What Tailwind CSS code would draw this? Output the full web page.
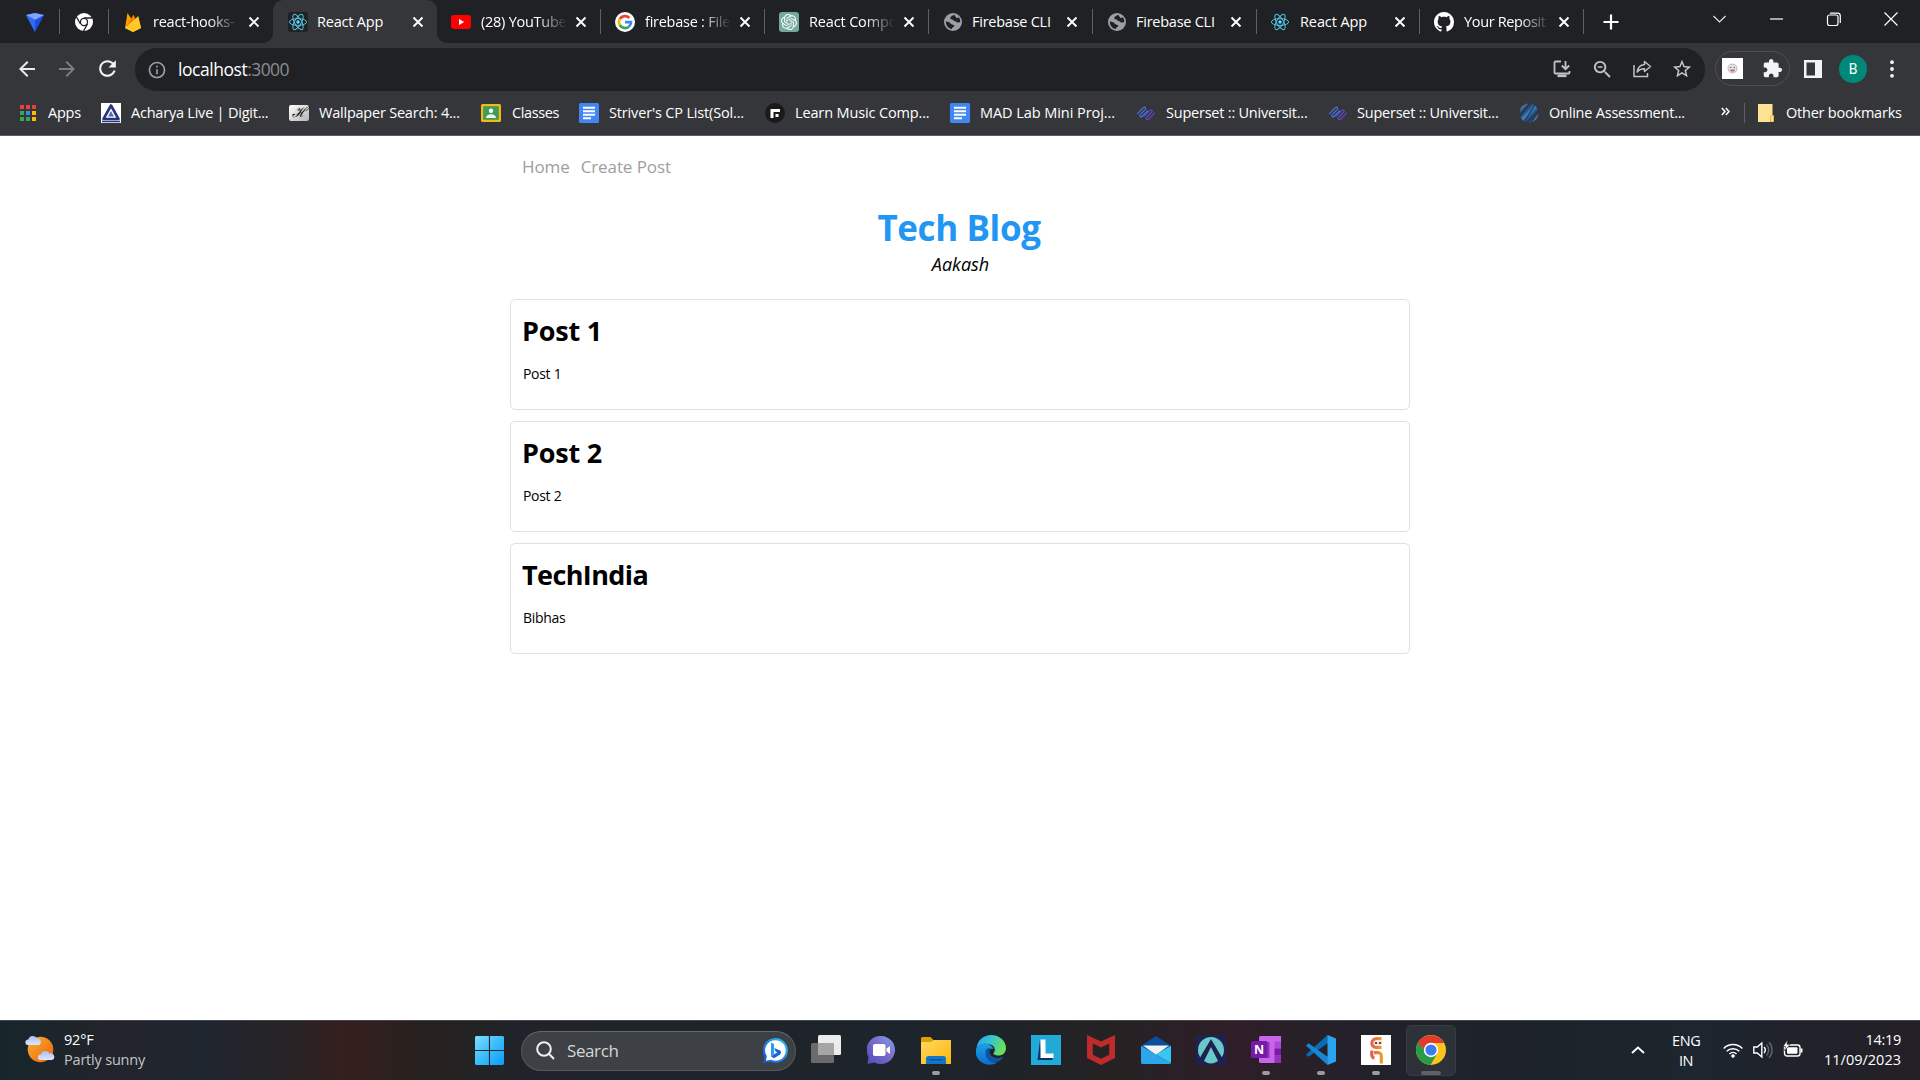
<!DOCTYPE html>
<html lang="en">
<head>
<meta charset="utf-8">
<title>React App</title>
<script src="https://cdn.jsdelivr.net/npm/@tailwindcss/browser@4"></script>
</head>
<body class="w-[1920px] h-[1080px] overflow-hidden bg-white font-['Open_Sans',sans-serif] flex flex-col whitespace-nowrap">
<svg class="hidden">
  <symbol id="x" viewBox="0 0 12 12"><path d="M1.500 1.500l9 9M10.500 1.500l-9 9" stroke="#fff" stroke-width="1.900" fill="none"/></symbol>
  <symbol id="react" viewBox="0 0 20 20"><g fill="none" stroke="#53c1de" stroke-width="1"><ellipse cx="10" cy="10" rx="8.600" ry="3.400"/><ellipse cx="10" cy="10" rx="8.600" ry="3.400" transform="rotate(60 10 10)"/><ellipse cx="10" cy="10" rx="8.600" ry="3.400" transform="rotate(120 10 10)"/></g><circle cx="10" cy="10" r="1.700" fill="#61dafb"/></symbol>
  <symbol id="globe" viewBox="0 0 18 18"><circle cx="9" cy="9" r="9" fill="#9aa0a6"/><path fill="#202124" d="M10.500 2C8.500 2.300 7 3.300 6.300 4.600c-.3 1.300.7 1.900 2 2 .9.100 1 1.100 1.900 1.400 1 .3 1.700 0 2.200.9.600.9 2 .8 3.800.1.100-2-.4-3.500-1.400-4.700-.7.900-1.600 1-2.400.4-.8-.7-1.300-1.500-1.900-2.700zM1.900 8.600c-.2 3 1.300 5.600 3.800 6.800l2.300.7c0-1 .3-1.800 1.300-2 1.200-.3 1.300-1.500.3-2-1-.5-2-.4-2.700-1.300C5.800 9.500 4.400 8.500 1.900 8.600z"/></symbol>
  <symbol id="docs" viewBox="0 0 20 20"><rect width="20" height="20" rx="1.500" fill="#4285f4"/><path d="M4 4.800h12M4 8.300h12M4 11.800h12M4 15.300h8" stroke="#fff" stroke-width="1.900"/></symbol>
  <symbol id="superset" viewBox="0 0 20 20"><g fill="none" stroke-width="1.200" stroke-linecap="round"><path id="clip" d="M1.400 10.600L7.400 4.600a1.300 1.300 0 0 1 2 1.700L4.200 11.700a1.300 1.300 0 0 0 1.900 1.800L11.600 8" stroke="#4a72e0"/><path d="M1.400 10.600L7.400 4.600a1.300 1.300 0 0 1 2 1.700L4.200 11.700a1.300 1.300 0 0 0 1.900 1.800L11.600 8" transform="rotate(180 10 10.400)" stroke="#5c4bd0"/></g></symbol>
</svg>

<!-- Tab strip -->
<header class="h-[43px] bg-[#202124] flex items-stretch text-white text-[14.500px] tracking-[-0.25px] shrink-0">
  <div class="w-[59px] flex items-center pl-[25px]"><svg width="20" height="20" viewBox="0 0 20 20"><path d="M1 3l9-2 9 2-9 17z" fill="#1a4de0"/><path d="M1 3l9-2 9 2-9 5z" fill="#7fa4fb"/><path d="M1 3l9 5v12z" fill="#2f6bf2"/></svg></div>
  <div class="w-px h-[25px] self-center bg-[#5f6064]"></div>
  <div class="w-12 flex items-center pl-[15px]"><svg width="18" height="18" viewBox="0 0 18 18"><circle cx="9" cy="9" r="9" fill="#fff"/><circle cx="9" cy="9" r="4.200" fill="#202124"/><circle cx="9" cy="9" r="2.900" fill="#fff"/><path d="M9 5h8M12.500 11l-4 7M5.500 11L1.500 4" stroke="#202124" stroke-width="1.300"/></svg></div>
  <div class="w-px h-[25px] self-center bg-[#5f6064]"></div>
  <div class="w-[164px] flex items-center pl-4 gap-3">
    <svg class="w-4 h-5" viewBox="0 0 16 20"><path d="M0 16L2.500 1l4 6L8.500 3l2 4 2.800-3L16 16l-8 4z" fill="#ffa000"/><path d="M0 16L8.500 3l1.500 4z" fill="#f57c00"/><path d="M0 16L13 4.500 16 16l-8 4z" fill="#ffca28"/></svg>
    <span class="w-[86px] overflow-hidden [mask-image:linear-gradient(to_right,black_65%,transparent)]">react-hooks-</span><svg class="w-3 h-3 -ml-[3px]"><use href="#x"/></svg>
  </div>
  <div class="relative w-[164px] flex items-center pl-[15px] gap-[10px] bg-[#35363a] rounded-t-[10px]">
    <svg class="absolute -left-[10px] bottom-0 w-[10px] h-[10px]" viewBox="0 0 10 10"><path d="M10 0v10H0A10 10 0 0 0 10 0z" fill="#35363a"/></svg>
    <svg class="absolute -right-[10px] bottom-0 w-[10px] h-[10px]" viewBox="0 0 10 10"><path d="M0 0v10h10A10 10 0 0 1 0 0z" fill="#35363a"/></svg>
    <svg class="w-5 h-5 bg-[#202124] rounded-[3px]"><use href="#react"/></svg>
    <span class="w-[86px] tracking-[-0.2px] -ml-px">React App</span><svg class="w-3 h-3 ml-[-1px]"><use href="#x"/></svg>
  </div>
  <div class="w-[163px] flex items-center pl-[14px] gap-[10px]">
    <svg class="w-5 h-[14px]" viewBox="0 0 20 14"><rect width="20" height="14" rx="3" fill="#f00"/><path d="M8 4l5.200 3L8 10z" fill="#fff"/></svg>
    <span class="w-[86px] overflow-hidden [mask-image:linear-gradient(to_right,black_65%,transparent)]">(28) YouTube</span><svg class="w-3 h-3 ml-[-2px]"><use href="#x"/></svg>
  </div>
  <div class="w-px h-[25px] self-center bg-[#5f6064]"></div>
  <div class="w-[163px] flex items-center pl-[14px] gap-[10px]">
    <svg class="w-5 h-5" viewBox="0 0 20 20"><circle cx="10" cy="10" r="10" fill="#fff"/><g fill="none" stroke-width="2.700"><path d="M14.300 6A6 6 0 0 0 4.800 7" stroke="#ea4335"/><path d="M4.800 7a6 6 0 0 0 0 6" stroke="#fbbc05"/><path d="M4.800 13a6 6 0 0 0 9 1.700" stroke="#34a853"/><path d="M13.800 14.700A6 6 0 0 0 16 10.200H10" stroke="#4285f4"/></g></svg>
    <span class="w-[86px] overflow-hidden [mask-image:linear-gradient(to_right,black_65%,transparent)]">firebase : File</span><svg class="w-3 h-3 ml-[-2px]"><use href="#x"/></svg>
  </div>
  <div class="w-px h-[25px] self-center bg-[#5f6064]"></div>
  <div class="w-[163px] flex items-center pl-[14px] gap-[10px]">
    <svg class="w-5 h-5 bg-[#74aa9c] rounded-[3px] p-[2px]" viewBox="0 0 24 24"><path fill="#fff" d="M22.2819 9.8211a5.9847 5.9847 0 0 0-.5157-4.9108 6.0462 6.0462 0 0 0-6.5098-2.9A6.0651 6.0651 0 0 0 4.9807 4.1818a5.9847 5.9847 0 0 0-3.9977 2.9 6.0462 6.0462 0 0 0 .7427 7.0966 5.98 5.98 0 0 0 .511 4.9107 6.051 6.051 0 0 0 6.5146 2.9001A5.9847 5.9847 0 0 0 13.2599 24a6.0557 6.0557 0 0 0 5.7718-4.2058 5.9894 5.9894 0 0 0 3.9977-2.9001 6.0557 6.0557 0 0 0-.7475-7.0729zm-9.022 12.6081a4.4755 4.4755 0 0 1-2.8764-1.0408l.1419-.0804 4.7783-2.7582a.7948.7948 0 0 0 .3927-.6813v-6.7369l2.02 1.1686a.071.071 0 0 1 .038.052v5.5826a4.504 4.504 0 0 1-4.4945 4.4944zm-9.6607-4.1254a4.4708 4.4708 0 0 1-.5346-3.0137l.142.0852 4.783 2.7582a.7712.7712 0 0 0 .7806 0l5.8428-3.3685v2.3324a.0804.0804 0 0 1-.0332.0615L9.74 19.9502a4.4992 4.4992 0 0 1-6.1408-1.6464zM2.3408 7.8956a4.485 4.485 0 0 1 2.3655-1.9728V11.6a.7664.7664 0 0 0 .3879.6765l5.8144 3.3543-2.0201 1.1685a.0757.0757 0 0 1-.071 0l-4.8303-2.7865A4.504 4.504 0 0 1 2.3408 7.872zm16.5963 3.8558L13.1038 8.364 15.1192 7.2a.0757.0757 0 0 1 .071 0l4.8303 2.7913a4.4944 4.4944 0 0 1-.6765 8.1042v-5.6772a.79.79 0 0 0-.407-.667zm2.0107-3.0231l-.142-.0852-4.7735-2.7818a.7759.7759 0 0 0-.7854 0L9.409 9.2297V6.8974a.0662.0662 0 0 1 .0284-.0615l4.8303-2.7866a4.4992 4.4992 0 0 1 6.6802 4.66zM8.3065 12.863l-2.02-1.1638a.0804.0804 0 0 1-.038-.0567V6.0742a4.4992 4.4992 0 0 1 7.3757-3.4537l-.142.0805L8.704 5.459a.7948.7948 0 0 0-.3927.6813zm1.0976-2.3654l2.602-1.4998 2.6069 1.4998v2.9994l-2.5974 1.4997-2.6067-1.4997Z"/></svg>
    <span class="w-[86px] overflow-hidden tracking-[-0.15px] [mask-image:linear-gradient(to_right,black_65%,transparent)]">React Compo</span><svg class="w-3 h-3 ml-[-2px]"><use href="#x"/></svg>
  </div>
  <div class="w-px h-[25px] self-center bg-[#5f6064]"></div>
  <div class="w-[163px] flex items-center pl-[15px] gap-[11px]">
    <svg class="w-[18px] h-[18px]"><use href="#globe"/></svg>
    <span class="w-[86px] -ml-px">Firebase CLI</span><svg class="w-3 h-3 ml-[-3px]"><use href="#x"/></svg>
  </div>
  <div class="w-px h-[25px] self-center bg-[#5f6064]"></div>
  <div class="w-[163px] flex items-center pl-[15px] gap-[11px]">
    <svg class="w-[18px] h-[18px]"><use href="#globe"/></svg>
    <span class="w-[86px] -ml-px">Firebase CLI</span><svg class="w-3 h-3 ml-[-3px]"><use href="#x"/></svg>
  </div>
  <div class="w-px h-[25px] self-center bg-[#5f6064]"></div>
  <div class="w-[162px] flex items-center pl-[13px] gap-[10px]">
    <svg class="w-5 h-5"><use href="#react"/></svg>
    <span class="w-[86px] tracking-[-0.1px]">React App</span><svg class="w-3 h-3 ml-[-2px]"><use href="#x"/></svg>
  </div>
  <div class="w-px h-[25px] self-center bg-[#5f6064]"></div>
  <div class="w-[163px] flex items-center pl-[14px] gap-[10px]">
    <svg class="w-5 h-5" viewBox="0 0 16 16"><path fill="#fff" d="M8 0C3.580 0 0 3.580 0 8c0 3.540 2.290 6.530 5.470 7.590.4.070.55-.17.55-.38 0-.19-.01-.82-.01-1.490-2.010.37-2.530-.49-2.690-.94-.09-.23-.48-.94-.82-1.130-.28-.15-.68-.52-.01-.53.63-.01 1.080.58 1.230.82.72 1.210 1.870.87 2.330.66.07-.52.28-.87.51-1.070-1.780-.2-3.640-.89-3.640-3.950 0-.87.31-1.590.82-2.150-.08-.2-.36-1.020.08-2.120 0 0 .67-.21 2.200.82.64-.18 1.320-.27 2-.27s1.360.09 2 .27c1.530-1.040 2.200-.82 2.200-.82.44 1.100.16 1.920.08 2.120.51.56.82 1.270.82 2.150 0 3.070-1.870 3.750-3.650 3.950.29.25.54.73.54 1.480 0 1.070-.01 1.930-.01 2.200 0 .21.15.46.55.38A8.010 8.010 0 0 0 16 8c0-4.420-3.580-8-8-8z"/></svg>
    <span class="w-[86px] overflow-hidden tracking-[-0.35px] [mask-image:linear-gradient(to_right,black_65%,transparent)]">Your Reposit</span><svg class="w-3 h-3 ml-[-2px]"><use href="#x"/></svg>
  </div>
  <div class="w-px h-[25px] self-center bg-[#5f6064]"></div>
  <svg class="w-4 h-4 self-center ml-[19px]" viewBox="0 0 16 16"><path d="M8 .5v15M.5 8h15" stroke="#fff" stroke-width="2.200"/></svg>
  <div class="ml-auto h-[37px] flex items-center pr-px">
    <svg class="w-[57px] h-[14px]" viewBox="0 0 57 14" fill="none" stroke="#e8eaed" stroke-width="1.100"><path d="M22.500 4l6 6 6-6"/></svg>
    <svg class="w-[57px] h-[14px]" viewBox="0 0 57 14" fill="none" stroke="#fff" stroke-width="1.200"><path d="M22 7h13"/></svg>
    <svg class="w-[57px] h-[14px]" viewBox="0 0 57 14" fill="none" stroke="#fff" stroke-width="1.200"><rect x="22.500" y="3" width="10.500" height="10.500" rx="2"/><path d="M25 1.100h7.500a2.800 2.800 0 0 1 2.800 2.800V11"/></svg>
    <svg class="w-[57px] h-[14px]" viewBox="0 0 57 14" fill="none" stroke="#fff" stroke-width="1.200"><path d="M22.500.5l13 13M35.500.5l-13 13"/></svg>
  </div>
</header>

<!-- Toolbar -->
<div class="h-[50px] bg-[#35363a] flex items-center shrink-0">
  <div class="w-[135px] flex items-center pl-[15px] gap-4 pt-px">
    <svg class="w-6 h-6" viewBox="0 0 24 24" fill="#e8eaed"><path d="M20 11H7.830l5.590-5.590L12 4l-8 8 8 8 1.410-1.410L7.830 13H20v-2z"/></svg>
    <svg class="w-6 h-6 rotate-180" viewBox="0 0 24 24" fill="#7c7d80"><path d="M20 11H7.830l5.590-5.590L12 4l-8 8 8 8 1.410-1.410L7.830 13H20v-2z"/></svg>
    <svg class="w-[25px] h-[25px]" viewBox="0 0 24 24" fill="#f1f3f4"><path d="M17.650 6.350C16.200 4.900 14.210 4 12 4c-4.420 0-7.990 3.580-7.990 8s3.570 8 7.990 8c3.730 0 6.840-2.550 7.730-6h-2.080c-.82 2.330-3.040 4-5.650 4-3.310 0-6-2.690-6-6s2.690-6 6-6c1.660 0 3.140.69 4.220 1.780L13 11h7V4l-2.350 2.350z"/></svg>
  </div>
  <div class="w-[1570px] h-[43px] mt-[3px] rounded-full bg-[#202124] flex items-center pl-[13px] pr-[3px]">
    <svg class="w-5 h-5 -ml-px" viewBox="0 0 24 24" fill="#9aa0a6"><path d="M11 7h2v2h-2zm0 4h2v6h-2zm1-9C6.480 2 2 6.480 2 12s4.480 10 10 10 10-4.480 10-10S17.520 2 12 2zm0 18c-4.410 0-8-3.590-8-8s3.590-8 8-8 8 3.590 8 8-3.590 8-8 8z"/></svg>
    <div class="ml-[11px] -mt-px text-[17.500px] tracking-[-0.45px] text-white"><span>localhost</span><span class="text-[#8a8d91] tracking-[-0.6px]">:3000</span></div>
    <div class="ml-auto flex">
      <div class="w-10 flex justify-center"><svg class="w-[18px] h-[18px]" viewBox="0 0 18 18" fill="none" stroke="#bfc2c6" stroke-width="1.800"><path d="M8 1.500H2.500a1 1 0 0 0-1 1v10a1 1 0 0 0 1 1h13a1 1 0 0 0 1-1V11"/><path d="M12.500 1v7.500M8.800 5.500l3.700 3.700 3.700-3.700"/><path d="M4.500 15.800h9" stroke-width="2.600"/></svg></div>
      <div class="w-10 flex justify-center"><svg class="w-[23px] h-[23px] -my-[2px]" viewBox="0 0 24 24" fill="#bfc2c6"><path d="M15.500 14h-.79l-.28-.27C15.410 12.590 16 11.110 16 9.500 16 5.910 13.090 3 9.500 3S3 5.910 3 9.500 5.910 16 9.500 16c1.610 0 3.090-.59 4.230-1.570l.27.28v.79l5 4.990L20.490 19l-4.990-5zm-6 0C7.010 14 5 11.990 5 9.500S7.010 5 9.500 5 14 7.010 14 9.500 11.990 14 9.500 14zM7 8.700h5v1.400H7z"/></svg></div>
      <div class="w-10 flex justify-center"><svg class="w-5 h-[18px]" viewBox="0 0 20 18" fill="none" stroke="#bfc2c6" stroke-width="1.500"><path d="M2 5v11.500h13.500V13"/><path d="M12.500 1.500l6 5-6 5V8.700c-3.200 0-5.500.8-7.300 3.300.5-4 3-7 7.300-7.500z" stroke-linejoin="round"/></svg></div>
      <div class="w-10 flex justify-center"><svg class="w-[22px] h-[22px] -my-[2px]" viewBox="0 0 24 24" fill="#c8cacd"><path d="M22 9.240l-7.190-.62L12 2 9.190 8.630 2 9.240l5.460 4.730L5.820 21 12 17.270 18.180 21l-1.630-7.030L22 9.240zM12 15.400l-3.760 2.270 1-4.280-3.320-2.880 4.380-.38L12 6.100l1.710 4.040 4.380.38-3.320 2.880 1 4.280L12 15.400z"/></svg></div>
    </div>
  </div>
  <div class="ml-[10px] w-[75px] h-[35px] mt-px rounded-full border border-[#4e4f53] flex items-center pl-[6px] gap-[19px]">
    <svg class="w-[21px] h-[21px]" viewBox="0 0 21 21"><rect width="21" height="21" fill="#fff"/><circle cx="10.500" cy="10.500" r="4.500" fill="#e2e2e2" stroke="#aaa" stroke-width=".8"/><path d="M8 9.500h1.500M11.500 9.500H13" stroke="#777"/><path d="M8 11.500h5c0 3-5 3-5 0z" fill="#c66"/></svg>
    <svg class="w-[21px] h-[21px]" viewBox="0 0 24 24" fill="#f1f3f4"><path d="M20.500 11H19V7c0-1.100-.9-2-2-2h-4V3.500C13 2.120 11.880 1 10.500 1S8 2.120 8 3.500V5H4c-1.100 0-1.990.9-1.990 2v3.800H3.500c1.490 0 2.700 1.210 2.700 2.700s-1.210 2.700-2.700 2.700H2V20c0 1.100.9 2 2 2h3.800v-1.500c0-1.490 1.210-2.700 2.700-2.700 1.490 0 2.700 1.210 2.700 2.700V22H17c1.100 0 2-.9 2-2v-4h1.500c1.380 0 2.500-1.120 2.500-2.500S21.880 11 20.500 11z"/></svg>
  </div>
  <svg class="ml-[14px] w-[18px] h-[18px] mt-px" viewBox="0 0 18 18"><path fill="#f1f3f4" fill-rule="evenodd" d="M0 0h18v18H0zM2.500 2.500v13H11v-13z"/></svg>
  <div class="ml-[17px] w-7 h-7 mt-[2px] rounded-full bg-[#00897b] flex items-center justify-center text-white text-[14px] font-['Roboto',sans-serif]">B</div>
  <svg class="ml-[23px] w-1 h-[18px] mt-[2px]" viewBox="0 0 4 18" fill="#f1f3f4"><circle cx="2" cy="2.200" r="1.900"/><circle cx="2" cy="9" r="1.900"/><circle cx="2" cy="15.800" r="1.900"/></svg>
</div>

<!-- Bookmarks bar -->
<div class="h-[43px] bg-[#35363a] border-b border-[#5f6064] flex items-center text-white text-[14.500px] tracking-[-0.22px] shrink-0 pl-5 pb-[3px]">
  <div class="w-[81px] flex items-center gap-3"><svg class="w-4 h-4" viewBox="0 0 16 16"><path fill="#ea4335" d="M0 0h4v4H0zM6 0h4v4H6zM12 0h4v4h-4z"/><path fill="#34a853" d="M0 6h4v4H0zM0 12h4v4H0zM6 12h4v4H6z"/><path fill="#4285f4" d="M6 6h4v4H6z"/><path fill="#fbbc05" d="M12 6h4v4h-4zM12 12h4v4h-4z"/></svg><span>Apps</span></div>
  <div class="w-[188px] flex items-center gap-[10px]"><svg class="w-5 h-5" viewBox="0 0 20 20"><rect width="20" height="20" fill="#fff"/><path d="M10 2.500L2.500 16h15z" fill="none" stroke="#27357e" stroke-width="2.600" stroke-linejoin="round"/><path d="M10 8l-3 5.500h6z" fill="#5a66a5"/><path d="M1 18.500h18" stroke="#27357e" stroke-width="1.500"/></svg><span>Acharya Live | Digit...</span></div>
  <div class="w-[192px] flex items-center gap-[10px]"><div class="w-5 h-4 rounded-[2px] bg-linear-to-br from-white to-[#b5b5b5] text-black font-['Liberation_Serif',serif] italic text-[14px] leading-4 text-center">ℋ</div><span class="tracking-[-0.22px]">Wallpaper Search: 4...</span></div>
  <div class="w-[98px] flex items-center gap-[11px]"><svg class="w-5 h-[18px]" viewBox="0 0 20 18"><rect width="20" height="18" rx="1.500" fill="#f5b912"/><rect x="2.200" y="2.200" width="15.600" height="13.600" fill="#3f9b57"/><circle cx="10" cy="6.800" r="2.200" fill="#fff"/><path d="M5 14c0-5 10-5 10 0z" fill="#e8f5ea"/></svg><span class="tracking-[-0.4px]">Classes</span></div>
  <div class="w-[186px] flex items-center gap-[10px]"><svg class="w-5 h-5"><use href="#docs"/></svg><span class="tracking-[-0.16px]">Striver's CP List(Sol...</span></div>
  <div class="w-[185px] flex items-center gap-[10px]"><svg class="w-5 h-5" viewBox="0 0 20 20"><circle cx="10" cy="10" r="10" fill="#1b1a1a"/><path d="M5.500 15V6h9.500v3H8.500v6z" fill="#fff"/><rect x="10.500" y="11" width="3" height="3" fill="#fff"/></svg><span class="tracking-[-0.14px]">Learn Music Comp...</span></div>
  <div class="w-[186px] flex items-center gap-[10px]"><svg class="w-5 h-5"><use href="#docs"/></svg><span class="tracking-[-0.06px]">MAD Lab Mini Proj...</span></div>
  <div class="w-[192px] flex items-center gap-[10px]"><svg class="w-5 h-5"><use href="#superset"/></svg><span>Superset :: Universit...</span></div>
  <div class="w-[191px] flex items-center gap-[9px]"><svg class="w-5 h-5"><use href="#superset"/></svg><span>Superset :: Universit...</span></div>
  <div class="w-[202px] flex items-center gap-[10px]"><svg class="w-5 h-5" viewBox="0 0 20 20"><defs><linearGradient id="oa" x1="0" y1="0" x2="1" y2="1"><stop stop-color="#b9c4d0"/><stop offset=".3" stop-color="#153a6c"/><stop offset=".5" stop-color="#3d83c6"/><stop offset=".7" stop-color="#143766"/><stop offset="1" stop-color="#b5cbe0"/></linearGradient></defs><circle cx="10" cy="10" r="9.500" fill="url(#oa)"/><path d="M10.500.500L0 15M16 2L5 19M20 7l-8 12.500" stroke="#35363a" stroke-width="1.300" fill="none"/></svg><span>Online Assessment...</span></div>
  <svg class="w-[9px] h-[9px] mb-[2px]" viewBox="0 0 9 9" fill="none" stroke="#fff" stroke-width="1.500"><path d="M.8 1l3.200 3.500L.8 8M4.800 1L8 4.500 4.800 8"/></svg>
  <div class="w-px h-5 bg-[#5f6064] ml-[14px]"></div>
  <svg class="w-4 h-[18px] ml-[13px]" viewBox="0 0 16 18"><path d="M0 0h14.500v11.500H16V18H0z" fill="#fde293"/><path d="M12.500 18v-5.500l2-1 1 1V18z" fill="#fde293" stroke="#d9a521" stroke-width=".8"/></svg>
  <span class="ml-3">Other bookmarks</span>
</div>

<!-- Blog page -->
<main class="h-[884px] w-[900px] mx-auto shrink-0 text-black">
  <nav class="pt-[17px] pl-3 flex gap-[11px] text-[17px] leading-[27px] tracking-[-0.1px] text-[#9e9e9e]"><a>Home</a><a>Create Post</a></nav>
  <div class="text-center mt-[24px]">
    <h1 class="text-[35px] leading-[48px] tracking-[-0.4px] font-bold text-[#2196f3] pr-[2px]">Tech Blog</h1>
    <p class="text-[18px] leading-6 italic pl-px">Aakash</p>
  </div>
  <section class="mt-[23px] flex flex-col gap-[11px]">
    <article class="h-[111px] border border-[#e0e0e0] rounded-[5px] px-[11px] pt-3"><h2 class="text-[27px] leading-[38px] tracking-[-0.2px] font-bold">Post 1</h2><p class="mt-3 pl-px text-[14px] leading-6 tracking-[-0.3px]">Post 1</p></article>
    <article class="h-[111px] border border-[#e0e0e0] rounded-[5px] px-[11px] pt-3"><h2 class="text-[27px] leading-[38px] tracking-[-0.2px] font-bold">Post 2</h2><p class="mt-3 pl-px text-[14px] leading-6 tracking-[-0.3px]">Post 2</p></article>
    <article class="h-[111px] border border-[#e0e0e0] rounded-[5px] px-[11px] pt-3"><h2 class="text-[27px] leading-[38px] tracking-[-0.6px] font-bold">TechIndia</h2><p class="mt-3 pl-px text-[14px] leading-6 tracking-[-0.3px]">Bibhas</p></article>
  </section>
</main>

<!-- Taskbar -->
<footer class="h-[60px] shrink-0 border-t border-[#43474b] flex items-center text-white text-[14.500px] bg-[linear-gradient(90deg,#17262b_0px,#22242b_110px,#1f252e_200px,#262327_280px,#351f1e_345px,#26211f_430px,#20242a_520px,#1e242b_900px,#1d2328_1000px,#262223_1110px,#2e1e29_1240px,#20222a_1400px,#1c2329_1550px,#1d252e_1700px,#241f26_1920px)]">
  <svg class="ml-[25px] w-[30px] h-[29px] mb-[4px]" viewBox="0 0 30 29"><defs><linearGradient id="sun" x1="0" y1="0" x2="1" y2="1"><stop stop-color="#f6b32b"/><stop offset="1" stop-color="#f0600f"/></linearGradient><linearGradient id="cl" x1="0" y1="0" x2="0" y2="1"><stop stop-color="#a9bdf2"/><stop offset="1" stop-color="#dde6fb"/></linearGradient></defs><circle cx="15.500" cy="15.500" r="12.800" fill="url(#sun)"/><path d="M3 11a2.800 2.800 0 0 1 .4-5.600 4.700 4.700 0 0 1 8.800-.8 3.400 3.400 0 0 1 1.800 6.400z" fill="url(#cl)"/><path d="M15.500 26a2.800 2.800 0 0 1 .4-5.600 4.700 4.700 0 0 1 8.800-.8A3.400 3.400 0 0 1 27 26z" fill="url(#cl)"/></svg>
  <div class="ml-[9px] w-[411px] leading-5 pb-[2px] tracking-[-0.2px]"><div>92°F</div><div class="text-[#c6c5c6]">Partly sunny</div></div>
  <svg class="w-[29px] h-[29px]" viewBox="0 0 29 29"><defs><linearGradient id="win" x1="0" y1="0" x2="1" y2="1"><stop stop-color="#7fdcff"/><stop offset=".5" stop-color="#3bbdfc"/><stop offset="1" stop-color="#0b9bfb"/></linearGradient></defs><path fill="url(#win)" d="M1 0h12.900v14H0V1zM15 0h13l1 1v13H15zM0 15h13.900v14H1l-1-1zM15 15h14v13l-1 1H15z"/></svg>
  <div class="ml-[17px] w-[275px] h-10 rounded-full bg-[#3d4045] border border-[#56595d] border-t-[#66686c] flex items-center pl-[14px] pr-[7px] text-[#d6d6d7] text-[17px]">
    <svg class="w-[19px] h-[19px]" viewBox="0 0 19 19" fill="none" stroke="#f0f0f0" stroke-width="2"><circle cx="8" cy="8" r="6.800"/><path d="M12.800 12.800l5.200 5.200"/></svg>
    <span class="ml-3 tracking-[-0.4px]">Search</span>
    <svg class="ml-auto w-[25px] h-[25px]" viewBox="0 0 25 25"><defs><linearGradient id="bing" x1="1" y1="0" x2="0" y2="1"><stop stop-color="#29c6f5"/><stop offset="1" stop-color="#1b4fd0"/></linearGradient></defs><path d="M12.500 0a12.500 12.500 0 1 1-5 24L0 25l1.300-6.500A12.500 12.500 0 0 1 12.500 0z" fill="url(#bing)"/><path d="M12.500 2.200a10.300 10.300 0 1 1-4.500 19.600l-5 1 .8-4.700A10.300 10.300 0 0 1 12.500 2.200z" fill="#fff"/><path d="M8 4.500l3 1.500v10.200l-3 2.300z" fill="#2a9df0"/><path d="M8 18.500l3-2.200 3.300-1.800-1.800-1-1.300-3.500 6 2.600c1.200 1 1.100 3-.2 3.900l-6 3.800z" fill="#1766d8"/></svg>
  </div>
  <div class="ml-[2px] flex h-[50px]">
    <div class="w-[55px] flex items-center justify-center"><svg class="w-[30px] h-[28px] -mt-[3px]" viewBox="0 0 30 28"><rect y="8" width="23" height="20" rx="1.500" fill="#6b6b6b"/><rect x="7" y="0" width="23" height="20" rx="1.500" fill="#ececec"/><path d="M7 8h16v12H8.500A1.500 1.500 0 0 1 7 18.500z" fill="#a6a6a6"/></svg></div>
    <div class="w-[55px] flex items-center justify-center"><svg class="w-[28px] h-[28px] -mt-[1px]" viewBox="0 0 28 28"><defs><linearGradient id="chat" x1="1" y1="0" x2="0" y2="1"><stop stop-color="#7ea6f2"/><stop offset=".45" stop-color="#7a6cc8"/><stop offset="1" stop-color="#4f4bb8"/></linearGradient></defs><path d="M14 0a14 14 0 1 1-6.500 26.400L.5 28l1-7A14 14 0 0 1 14 0z" fill="url(#chat)"/><rect x="6" y="8" width="12.500" height="12" rx="1.800" fill="#fff"/><path d="M19.500 12.500l3.500-2.500v8l-3.500-2.500z" fill="#fff"/></svg></div>
    <div class="relative w-[55px] flex items-center justify-center"><svg class="w-[30px] h-[27px] -mt-[1px]" viewBox="0 0 30 27"><defs><linearGradient id="fold" x1="0" y1="0" x2="1" y2="1"><stop stop-color="#ffd95e"/><stop offset="1" stop-color="#fbb610"/></linearGradient></defs><path d="M0 1.500A1.500 1.500 0 0 1 1.500 0h8L13 3.500V8H0z" fill="#e0a000"/><path d="M0 5h10l3-2h17v24H0z" fill="url(#fold)"/><path d="M5 27v-5.500A2.500 2.500 0 0 1 7.500 19h15a2.500 2.500 0 0 1 2.500 2.500V27z" fill="#1276c8"/><path d="M8.500 22.800h13" stroke="#084d91" stroke-width="1.200"/></svg><i class="absolute bottom-[1px] w-2 h-1 rounded-full bg-[#9a9c9f]"></i></div>
    <div class="w-[55px] flex items-center justify-center"><svg class="w-[30px] h-[30px] -mt-[2px]" viewBox="0 0 30 30"><defs><linearGradient id="e1" x1="0" y1="0" x2="1" y2=".3"><stop stop-color="#2aa7ea"/><stop offset=".5" stop-color="#35c1d8"/><stop offset="1" stop-color="#6be05a"/></linearGradient><linearGradient id="e2" x1="0" y1="0" x2="0" y2="1"><stop stop-color="#1ba0e6"/><stop offset="1" stop-color="#0a6fd0"/></linearGradient></defs><path d="M.5 13C1.500 5 8 0 15 0c9 0 15 6.500 15 13 0 5-3.500 7.500-7.500 7.500-3.500 0-5.500-1.200-5-2.500 2-1.700 2-6-2-8C9 7.500 3 9 .5 13z" fill="url(#e1)"/><path d="M.2 13.500C2.500 8.500 9.500 7 14 10c1.800 1.200 2.800 2.300 3.300 4-4-1-6.300 2.500-5.300 6.500 1 4 4.500 7.500 9 7.300-9 5-20 .2-21.500-10.300a14 14 0 0 1 .7-4z" fill="url(#e2)"/><path d="M10 14.500c-1.500 5 .5 10 5 12.500 3.500 1.800 8.500.5 11.800-4.200.5-.8-.2-1.200-.8-.8-5 2.500-12.500 0-12.500-6 0-1 .3-2 1-2.800-1.700-.2-3.500.1-4.500 1.300z" fill="#12529e"/></svg></div>
    <div class="w-[55px] flex items-center justify-center"><svg class="w-[30px] h-[30px] -mt-[2px]" viewBox="0 0 30 30"><rect width="30" height="30" fill="#21a9d8"/><path d="M9 5L6.500 25h15v-2H11z" fill="#0d2f6b"/><path d="M9.500 4.500h5v14H22.500v4.500H9.500z" fill="#fff"/></svg></div>
    <div class="w-[55px] flex items-center justify-center"><svg class="w-[28px] h-[30px] -mt-[2px]" viewBox="0 0 28 30"><path d="M0 0l14 6.500L28 0v23l-14 7-14-7zM5.800 8.500v11.300l8.200 4 8.200-4V8.500L14 12.500z" fill="#bf2b2b" fill-rule="evenodd"/></svg></div>
    <div class="w-[55px] flex items-center justify-center"><svg class="w-[30px] h-[28px] -mt-[2px]" viewBox="0 0 30 28"><path d="M0 10L15 0l15 10v5H0z" fill="#0a4f9c"/><path d="M2 9.500h26L15 19z" fill="#f2f2f2"/><path d="M30 9.800L15 18.500l15 8.700z" fill="#35c8f5"/><path d="M0 9.800V26.500A1.500 1.500 0 0 0 1.500 28H28.500a1.500 1.500 0 0 0 1.300-1L15 18.500z" fill="#2ba6ea"/></svg></div>
    <div class="w-[55px] flex items-center justify-center"><svg class="w-[30px] h-[30px] -mt-[2px]" viewBox="0 0 30 30"><rect width="30" height="30" fill="#1f2152"/><circle cx="15" cy="15" r="13" fill="#69c8c8"/><path d="M15 4l13 22-4.500 3L15 12 6.500 29 2 26z" fill="#1f2152"/><path d="M15 20l4.500 7.500c-2.500 1.300-6.500 1.300-9 0z" fill="#69c8c8"/></svg></div>
    <div class="relative w-[55px] flex items-center justify-center"><svg class="w-[30px] h-[27px] -mt-[2px]" viewBox="0 0 30 27"><path d="M8 1.500A1.500 1.500 0 0 1 9.500 0H30v27H9.500A1.500 1.500 0 0 1 8 25.500z" fill="#ca64ea"/><path d="M23.500 5.500H30v7h-6.500z" fill="#ae4bd5"/><path d="M23.500 12.500H30v7h-6.500z" fill="#7719aa"/><path d="M23.500 19.500H30V27h-6.500z" fill="#9332bf"/><path d="M8 22h10.500V6H8z" fill="#8b3aad"/><rect y="5" width="16.500" height="17" rx="1.500" fill="#7719aa"/></svg><b class="absolute left-[16px] top-[16px] text-[12.500px] leading-4">N</b><i class="absolute bottom-[1px] w-2 h-1 rounded-full bg-[#9a9c9f]"></i></div>
    <div class="relative w-[55px] flex items-center justify-center"><svg class="w-[30px] h-[30px] -mt-[2px]" viewBox="0 0 30 30"><path d="M21.500 0L0 19.500l2.500 2.200L22 8z" fill="#0b6cb3"/><path d="M21.500 30L0 10.500l2.500-2.200L22 22z" fill="#1787d3"/><path d="M21.500 0L30 3.500v23L21.500 30z" fill="#2aa4f0"/></svg><i class="absolute bottom-[1px] w-2 h-1 rounded-full bg-[#9a9c9f]"></i></div>
    <div class="relative w-[55px] flex items-center justify-center"><svg class="w-[30px] h-[30px] -mt-[2px]" viewBox="0 0 30 30"><defs><linearGradient id="uc" gradientUnits="userSpaceOnUse" x1="9" y1="0" x2="22" y2="0"><stop stop-color="#e0584b"/><stop offset="1" stop-color="#f0a030"/></linearGradient></defs><rect width="30" height="30" fill="#fff"/><g fill="none" stroke="url(#uc)" stroke-width="3.200"><path d="M20.500 3.600h-5a4.500 4.500 0 0 0-4.500 4.400v.4a4 4 0 0 0 4 4h5.500"/><path d="M10.800 15.500v4a4 4 0 0 0 2.700 3.800M20.400 28.500v-7a3.500 3.500 0 0 0-3.400-3.900h-4"/></g><path d="M12.500 6.500h8.500v3h-8.500z" fill="#f3d4c8"/><path d="M14 8h2M18 8h2" stroke="#222" stroke-width="1.400"/></svg><i class="absolute bottom-[1px] w-2 h-1 rounded-full bg-[#9a9c9f]"></i></div>
    <div class="relative w-[50px] ml-[3px] -mt-px flex items-center justify-center rounded-[5px] bg-[#2d3138] border border-[#373b42]"><svg class="w-[30px] h-[30px]" viewBox="0 0 30 30"><circle cx="15" cy="15" r="15" fill="#fcc31e"/><path d="M15 15L2 7.500A15 15 0 0 0 14.500 30l7-12z" fill="#2a9a48"/><path d="M15 15H8.500L2 7.500a15 15 0 0 1 26 .5H15z" fill="#e23b2e"/><circle cx="15" cy="15" r="7.200" fill="#fff"/><circle cx="15" cy="15" r="5.600" fill="#3b7ded"/></svg><i class="absolute bottom-0 w-5 h-1 rounded-full bg-[#5f6166]"></i></div>
  </div>
  <div class="ml-auto flex items-center pr-[19px]">
    <svg class="w-[14px] h-2 -mt-px" viewBox="0 0 14 8"><path d="M1 7l6-5.500L13 7" fill="none" stroke="#fff" stroke-width="1.900"/></svg>
    <div class="ml-[27px] w-7 text-center leading-5 tracking-[-0.4px]"><div>ENG</div><div>IN</div></div>
    <svg class="ml-[23px] w-5 h-[15px]" viewBox="0 0 20 15" fill="none" stroke="#fff" stroke-width="1.500"><path d="M.7 5.500a13 13 0 0 1 18.600 0M3.700 8.300a9 9 0 0 1 12.600 0M6.500 11a5 5 0 0 1 7 0"/><circle cx="10" cy="13" r="1.300" fill="#fff" stroke-width="1"/></svg>
    <svg class="ml-[10px] w-5 h-[18px] -mt-px" viewBox="0 0 20 18" fill="none" stroke="#fff" stroke-width="1.400"><path d="M.8 6v6h3.500l4.500 4V2L4.300 6zM11 6a4.500 4.500 0 0 1 0 6"/><path d="M13.500 3.500a8 8 0 0 1 0 11M16 1.200a11.500 11.500 0 0 1 0 15.600" stroke="#63666b"/></svg>
    <svg class="ml-[10px] w-5 h-[17px] mb-[5px]" viewBox="0 0 20 17"><rect x="1.500" y="5" width="15.500" height="11" rx="2.500" fill="none" stroke="#fff" stroke-width="1.400"/><rect x="4" y="7.300" width="10.500" height="6.500" rx="1" fill="#fff"/><path d="M18.500 8.500v4" stroke="#fff" stroke-width="2"/><path d="M4.500 0L0 6.500h2.500L1.500 11 7 4.500H4z" fill="#fff" stroke="#1d252e" stroke-width=".6"/></svg>
    <div class="ml-[20px] w-[78px] text-right leading-5 pb-[2px]"><div class="tracking-[-0.3px]">14:19</div><div>11/09/2023</div></div>
  </div>
</footer>
</body>
</html>
